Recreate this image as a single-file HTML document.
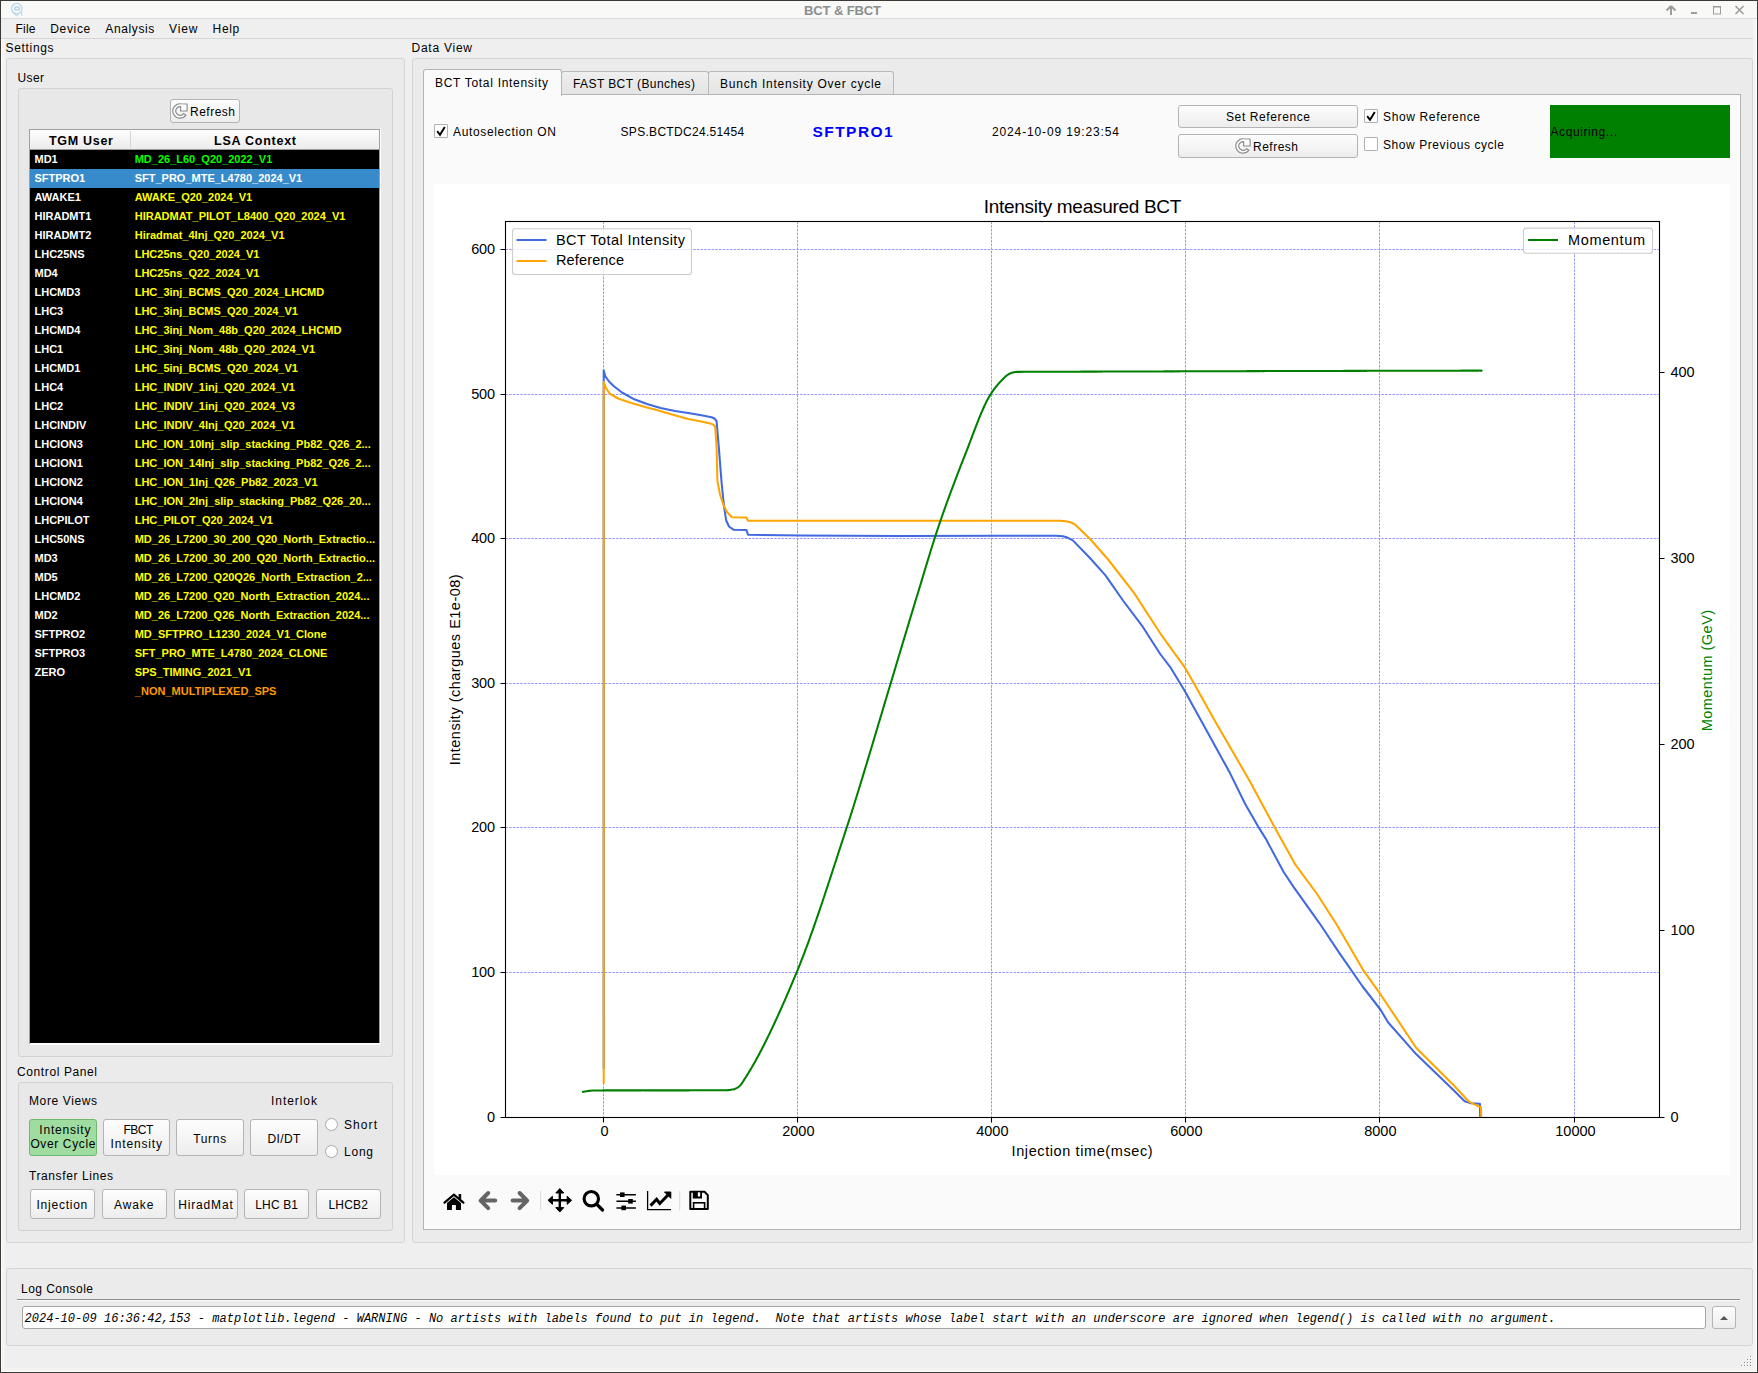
<!DOCTYPE html><html><head><meta charset="utf-8"><title>BCT &amp; FBCT</title><style>html,body{margin:0;padding:0;width:1758px;height:1373px;overflow:hidden;position:relative}</style></head><body><div style="position:absolute;left:0px;top:0px;width:1758px;height:1373px;background:#efefef"></div>
<div style="position:absolute;left:1px;top:1px;width:1756px;height:18px;background:#f9f9f8"></div>
<div style="position:absolute;left:1px;top:18px;width:1756px;height:1px;background:#dcdcdc"></div>
<div style="position:absolute;left:1px;top:38px;width:1752px;height:1px;background:#d6d6d6"></div>
<div style="position:absolute;left:1px;top:39px;width:4px;height:1333px;background:#f5f4f2"></div>
<div style="position:absolute;left:1px;top:39px;width:1px;height:1333px;background:#ffffff"></div>
<div style="position:absolute;left:1753px;top:19px;width:4px;height:1353px;background:#f5f4f2"></div>
<div style="position:absolute;left:1756px;top:19px;width:1px;height:1353px;background:#ffffff"></div>
<div style="position:absolute;left:1px;top:1368px;width:1756px;height:4px;background:#f5f4f2"></div>
<div style="position:absolute;left:1px;top:1371px;width:1756px;height:1px;background:#ffffff"></div>
<div style="position:absolute;left:0px;top:0px;width:1758px;height:1px;background:#3b3a36"></div>
<div style="position:absolute;left:0px;top:0px;width:1px;height:1373px;background:#3b3a36"></div>
<div style="position:absolute;left:1757px;top:0px;width:1px;height:1373px;background:#3b3a36"></div>
<div style="position:absolute;left:0px;top:1372px;width:1758px;height:1px;background:#3b3a36"></div>
<div style="position:absolute;left:804.00px;top:3.95px;font:normal bold 13px/13px 'Liberation Sans', sans-serif;letter-spacing:-0.111px;color:#8b8f8f;white-space:nowrap;">BCT &amp; FBCT</div>
<svg style="position:absolute;left:9px;top:1px" width="18" height="18" viewBox="0 0 18 18"><circle cx="7.8" cy="7.6" r="5.2" fill="none" stroke="#b4d6ee" stroke-width="1.3"/><ellipse cx="8" cy="7.4" rx="2.4" ry="1.6" fill="none" stroke="#a6cdea" stroke-width="1.2"/><path d="M4 11.5 L7.5 14.5 M12.5 11 L13 15 M9.5 12.5 L8 15.5" stroke="#b8d8ee" stroke-width="1.1"/></svg>
<svg style="position:absolute;left:1660px;top:2px" width="94" height="16" viewBox="0 0 94 16"><path d="M11 4 L6.5 8.5 M11 4 L15.5 8.5 M11 4 V13" stroke="#9c9c9c" stroke-width="2" fill="none"/><rect x="31" y="10" width="6" height="2" fill="#9c9c9c"/><rect x="53.5" y="4.5" width="7" height="7.5" fill="none" stroke="#9c9c9c" stroke-width="1"/><rect x="53" y="4" width="8" height="1.5" fill="#9c9c9c"/><path d="M75.5 4 L83.5 12 M83.5 4 L75.5 12" stroke="#9c9c9c" stroke-width="1.6"/></svg>
<div style="position:absolute;left:15.50px;top:22.80px;font:normal normal 12px/12px 'Liberation Sans', sans-serif;letter-spacing:0.217px;color:#000;white-space:nowrap;">File</div>
<div style="position:absolute;left:50.30px;top:22.80px;font:normal normal 12px/12px 'Liberation Sans', sans-serif;letter-spacing:0.660px;color:#000;white-space:nowrap;">Device</div>
<div style="position:absolute;left:105.30px;top:22.80px;font:normal normal 12px/12px 'Liberation Sans', sans-serif;letter-spacing:0.614px;color:#000;white-space:nowrap;">Analysis</div>
<div style="position:absolute;left:169.10px;top:22.80px;font:normal normal 12px/12px 'Liberation Sans', sans-serif;letter-spacing:0.850px;color:#000;white-space:nowrap;">View</div>
<div style="position:absolute;left:212.60px;top:22.80px;font:normal normal 12px/12px 'Liberation Sans', sans-serif;letter-spacing:0.633px;color:#000;white-space:nowrap;">Help</div>
<div style="position:absolute;left:5.60px;top:41.50px;font:normal normal 12px/12px 'Liberation Sans', sans-serif;letter-spacing:0.664px;color:#000;white-space:nowrap;">Settings</div>
<div style="position:absolute;left:6px;top:58px;width:399px;height:1185px;box-sizing:border-box;border:1px solid #d4d4d4;border-radius:3px;background:#ebebeb"></div>
<div style="position:absolute;left:17.50px;top:71.80px;font:normal normal 12px/12px 'Liberation Sans', sans-serif;letter-spacing:0.383px;color:#000;white-space:nowrap;">User</div>
<div style="position:absolute;left:18px;top:88px;width:375px;height:969px;box-sizing:border-box;border:1px solid #d2d2d2;border-radius:3px;background:#e8e8e8"></div>
<div style="position:absolute;left:170px;top:99px;width:70px;height:24px;box-sizing:border-box;border:1px solid #b4b4b4;border-radius:3px;background:linear-gradient(#fdfdfd,#ededed)"></div>
<svg style="position:absolute;left:172.4px;top:102.5px" width="17" height="17" viewBox="0 0 17 17"><path d="M8.6 0.8 A7.2 7.2 0 1 0 13.9 12.2 L11.7 10.6 A4.4 4.4 0 1 1 8.6 3.6 L8.6 8 L15.1 8 L15.1 1 Z" fill="#fcfcfc" stroke="#8c8c8c" stroke-width="1.15" stroke-linejoin="round"/></svg>
<div style="position:absolute;left:190.00px;top:105.80px;font:normal normal 12px/12px 'Liberation Sans', sans-serif;letter-spacing:0.500px;color:#000;white-space:nowrap;">Refresh</div>
<div style="position:absolute;left:29px;top:129px;width:351px;height:915px;background:#a0a0a0"></div>
<div style="position:absolute;left:30px;top:130px;width:349px;height:913px;background:#000"></div>
<div style="position:absolute;left:30px;top:1043px;width:351px;height:2px;background:#fff"></div>
<div style="position:absolute;left:380px;top:128px;width:1px;height:916px;background:#fff"></div>
<div style="position:absolute;left:30px;top:130px;width:349px;height:20px;background:linear-gradient(#fdfdfd,#ebebeb)"></div>
<div style="position:absolute;left:30px;top:149px;width:349px;height:1px;background:#9a9a9a"></div>
<div style="position:absolute;left:130px;top:131px;width:1px;height:17px;background:#d6d6d6"></div>
<div style="position:absolute;left:49.00px;top:135.18px;font:normal bold 12.5px/12.5px 'Liberation Sans', sans-serif;letter-spacing:0.707px;color:#000;white-space:nowrap;">TGM User</div>
<div style="position:absolute;left:214.00px;top:134.88px;font:normal bold 12.5px/12.5px 'Liberation Sans', sans-serif;letter-spacing:0.745px;color:#000;white-space:nowrap;">LSA Context</div>
<div style="position:absolute;left:34.50px;top:153.65px;font:normal bold 11px/11px 'Liberation Sans', sans-serif;letter-spacing:0.000px;color:#ffffff;white-space:nowrap;">MD1</div>
<div style="position:absolute;left:134.70px;top:153.65px;font:normal bold 11px/11px 'Liberation Sans', sans-serif;letter-spacing:0.000px;color:#00ff00;white-space:nowrap;">MD_26_L60_Q20_2022_V1</div>
<div style="position:absolute;left:30px;top:169px;width:349px;height:19px;background:#388bca"></div>
<div style="position:absolute;left:34.50px;top:172.65px;font:normal bold 11px/11px 'Liberation Sans', sans-serif;letter-spacing:0.000px;color:#ffffff;white-space:nowrap;">SFTPRO1</div>
<div style="position:absolute;left:134.70px;top:172.65px;font:normal bold 11px/11px 'Liberation Sans', sans-serif;letter-spacing:0.000px;color:#ffffff;white-space:nowrap;">SFT_PRO_MTE_L4780_2024_V1</div>
<div style="position:absolute;left:34.50px;top:191.65px;font:normal bold 11px/11px 'Liberation Sans', sans-serif;letter-spacing:0.000px;color:#ffffff;white-space:nowrap;">AWAKE1</div>
<div style="position:absolute;left:134.70px;top:191.65px;font:normal bold 11px/11px 'Liberation Sans', sans-serif;letter-spacing:0.000px;color:#ffff00;white-space:nowrap;">AWAKE_Q20_2024_V1</div>
<div style="position:absolute;left:34.50px;top:210.65px;font:normal bold 11px/11px 'Liberation Sans', sans-serif;letter-spacing:0.000px;color:#ffffff;white-space:nowrap;">HIRADMT1</div>
<div style="position:absolute;left:134.70px;top:210.65px;font:normal bold 11px/11px 'Liberation Sans', sans-serif;letter-spacing:0.000px;color:#ffff00;white-space:nowrap;">HIRADMAT_PILOT_L8400_Q20_2024_V1</div>
<div style="position:absolute;left:34.50px;top:229.65px;font:normal bold 11px/11px 'Liberation Sans', sans-serif;letter-spacing:0.000px;color:#ffffff;white-space:nowrap;">HIRADMT2</div>
<div style="position:absolute;left:134.70px;top:229.65px;font:normal bold 11px/11px 'Liberation Sans', sans-serif;letter-spacing:0.000px;color:#ffff00;white-space:nowrap;">Hiradmat_4Inj_Q20_2024_V1</div>
<div style="position:absolute;left:34.50px;top:248.65px;font:normal bold 11px/11px 'Liberation Sans', sans-serif;letter-spacing:0.000px;color:#ffffff;white-space:nowrap;">LHC25NS</div>
<div style="position:absolute;left:134.70px;top:248.65px;font:normal bold 11px/11px 'Liberation Sans', sans-serif;letter-spacing:0.000px;color:#ffff00;white-space:nowrap;">LHC25ns_Q20_2024_V1</div>
<div style="position:absolute;left:34.50px;top:267.65px;font:normal bold 11px/11px 'Liberation Sans', sans-serif;letter-spacing:0.000px;color:#ffffff;white-space:nowrap;">MD4</div>
<div style="position:absolute;left:134.70px;top:267.65px;font:normal bold 11px/11px 'Liberation Sans', sans-serif;letter-spacing:0.000px;color:#ffff00;white-space:nowrap;">LHC25ns_Q22_2024_V1</div>
<div style="position:absolute;left:34.50px;top:286.65px;font:normal bold 11px/11px 'Liberation Sans', sans-serif;letter-spacing:0.000px;color:#ffffff;white-space:nowrap;">LHCMD3</div>
<div style="position:absolute;left:134.70px;top:286.65px;font:normal bold 11px/11px 'Liberation Sans', sans-serif;letter-spacing:0.000px;color:#ffff00;white-space:nowrap;">LHC_3inj_BCMS_Q20_2024_LHCMD</div>
<div style="position:absolute;left:34.50px;top:305.65px;font:normal bold 11px/11px 'Liberation Sans', sans-serif;letter-spacing:0.000px;color:#ffffff;white-space:nowrap;">LHC3</div>
<div style="position:absolute;left:134.70px;top:305.65px;font:normal bold 11px/11px 'Liberation Sans', sans-serif;letter-spacing:0.000px;color:#ffff00;white-space:nowrap;">LHC_3inj_BCMS_Q20_2024_V1</div>
<div style="position:absolute;left:34.50px;top:324.65px;font:normal bold 11px/11px 'Liberation Sans', sans-serif;letter-spacing:0.000px;color:#ffffff;white-space:nowrap;">LHCMD4</div>
<div style="position:absolute;left:134.70px;top:324.65px;font:normal bold 11px/11px 'Liberation Sans', sans-serif;letter-spacing:0.000px;color:#ffff00;white-space:nowrap;">LHC_3inj_Nom_48b_Q20_2024_LHCMD</div>
<div style="position:absolute;left:34.50px;top:343.65px;font:normal bold 11px/11px 'Liberation Sans', sans-serif;letter-spacing:0.000px;color:#ffffff;white-space:nowrap;">LHC1</div>
<div style="position:absolute;left:134.70px;top:343.65px;font:normal bold 11px/11px 'Liberation Sans', sans-serif;letter-spacing:0.000px;color:#ffff00;white-space:nowrap;">LHC_3inj_Nom_48b_Q20_2024_V1</div>
<div style="position:absolute;left:34.50px;top:362.65px;font:normal bold 11px/11px 'Liberation Sans', sans-serif;letter-spacing:0.000px;color:#ffffff;white-space:nowrap;">LHCMD1</div>
<div style="position:absolute;left:134.70px;top:362.65px;font:normal bold 11px/11px 'Liberation Sans', sans-serif;letter-spacing:0.000px;color:#ffff00;white-space:nowrap;">LHC_5inj_BCMS_Q20_2024_V1</div>
<div style="position:absolute;left:34.50px;top:381.65px;font:normal bold 11px/11px 'Liberation Sans', sans-serif;letter-spacing:0.000px;color:#ffffff;white-space:nowrap;">LHC4</div>
<div style="position:absolute;left:134.70px;top:381.65px;font:normal bold 11px/11px 'Liberation Sans', sans-serif;letter-spacing:0.000px;color:#ffff00;white-space:nowrap;">LHC_INDIV_1inj_Q20_2024_V1</div>
<div style="position:absolute;left:34.50px;top:400.65px;font:normal bold 11px/11px 'Liberation Sans', sans-serif;letter-spacing:0.000px;color:#ffffff;white-space:nowrap;">LHC2</div>
<div style="position:absolute;left:134.70px;top:400.65px;font:normal bold 11px/11px 'Liberation Sans', sans-serif;letter-spacing:0.000px;color:#ffff00;white-space:nowrap;">LHC_INDIV_1inj_Q20_2024_V3</div>
<div style="position:absolute;left:34.50px;top:419.65px;font:normal bold 11px/11px 'Liberation Sans', sans-serif;letter-spacing:0.000px;color:#ffffff;white-space:nowrap;">LHCINDIV</div>
<div style="position:absolute;left:134.70px;top:419.65px;font:normal bold 11px/11px 'Liberation Sans', sans-serif;letter-spacing:0.000px;color:#ffff00;white-space:nowrap;">LHC_INDIV_4Inj_Q20_2024_V1</div>
<div style="position:absolute;left:34.50px;top:438.65px;font:normal bold 11px/11px 'Liberation Sans', sans-serif;letter-spacing:0.000px;color:#ffffff;white-space:nowrap;">LHCION3</div>
<div style="position:absolute;left:134.70px;top:438.65px;font:normal bold 11px/11px 'Liberation Sans', sans-serif;letter-spacing:0.000px;color:#ffff00;white-space:nowrap;">LHC_ION_10Inj_slip_stacking_Pb82_Q26_2...</div>
<div style="position:absolute;left:34.50px;top:457.65px;font:normal bold 11px/11px 'Liberation Sans', sans-serif;letter-spacing:0.000px;color:#ffffff;white-space:nowrap;">LHCION1</div>
<div style="position:absolute;left:134.70px;top:457.65px;font:normal bold 11px/11px 'Liberation Sans', sans-serif;letter-spacing:0.000px;color:#ffff00;white-space:nowrap;">LHC_ION_14Inj_slip_stacking_Pb82_Q26_2...</div>
<div style="position:absolute;left:34.50px;top:476.65px;font:normal bold 11px/11px 'Liberation Sans', sans-serif;letter-spacing:0.000px;color:#ffffff;white-space:nowrap;">LHCION2</div>
<div style="position:absolute;left:134.70px;top:476.65px;font:normal bold 11px/11px 'Liberation Sans', sans-serif;letter-spacing:0.000px;color:#ffff00;white-space:nowrap;">LHC_ION_1Inj_Q26_Pb82_2023_V1</div>
<div style="position:absolute;left:34.50px;top:495.65px;font:normal bold 11px/11px 'Liberation Sans', sans-serif;letter-spacing:0.000px;color:#ffffff;white-space:nowrap;">LHCION4</div>
<div style="position:absolute;left:134.70px;top:495.65px;font:normal bold 11px/11px 'Liberation Sans', sans-serif;letter-spacing:0.000px;color:#ffff00;white-space:nowrap;">LHC_ION_2Inj_slip_stacking_Pb82_Q26_20...</div>
<div style="position:absolute;left:34.50px;top:514.65px;font:normal bold 11px/11px 'Liberation Sans', sans-serif;letter-spacing:0.000px;color:#ffffff;white-space:nowrap;">LHCPILOT</div>
<div style="position:absolute;left:134.70px;top:514.65px;font:normal bold 11px/11px 'Liberation Sans', sans-serif;letter-spacing:0.000px;color:#ffff00;white-space:nowrap;">LHC_PILOT_Q20_2024_V1</div>
<div style="position:absolute;left:34.50px;top:533.65px;font:normal bold 11px/11px 'Liberation Sans', sans-serif;letter-spacing:0.000px;color:#ffffff;white-space:nowrap;">LHC50NS</div>
<div style="position:absolute;left:134.70px;top:533.65px;font:normal bold 11px/11px 'Liberation Sans', sans-serif;letter-spacing:0.000px;color:#ffff00;white-space:nowrap;">MD_26_L7200_30_200_Q20_North_Extractio...</div>
<div style="position:absolute;left:34.50px;top:552.65px;font:normal bold 11px/11px 'Liberation Sans', sans-serif;letter-spacing:0.000px;color:#ffffff;white-space:nowrap;">MD3</div>
<div style="position:absolute;left:134.70px;top:552.65px;font:normal bold 11px/11px 'Liberation Sans', sans-serif;letter-spacing:0.000px;color:#ffff00;white-space:nowrap;">MD_26_L7200_30_200_Q20_North_Extractio...</div>
<div style="position:absolute;left:34.50px;top:571.65px;font:normal bold 11px/11px 'Liberation Sans', sans-serif;letter-spacing:0.000px;color:#ffffff;white-space:nowrap;">MD5</div>
<div style="position:absolute;left:134.70px;top:571.65px;font:normal bold 11px/11px 'Liberation Sans', sans-serif;letter-spacing:0.000px;color:#ffff00;white-space:nowrap;">MD_26_L7200_Q20Q26_North_Extraction_2...</div>
<div style="position:absolute;left:34.50px;top:590.65px;font:normal bold 11px/11px 'Liberation Sans', sans-serif;letter-spacing:0.000px;color:#ffffff;white-space:nowrap;">LHCMD2</div>
<div style="position:absolute;left:134.70px;top:590.65px;font:normal bold 11px/11px 'Liberation Sans', sans-serif;letter-spacing:0.000px;color:#ffff00;white-space:nowrap;">MD_26_L7200_Q20_North_Extraction_2024...</div>
<div style="position:absolute;left:34.50px;top:609.65px;font:normal bold 11px/11px 'Liberation Sans', sans-serif;letter-spacing:0.000px;color:#ffffff;white-space:nowrap;">MD2</div>
<div style="position:absolute;left:134.70px;top:609.65px;font:normal bold 11px/11px 'Liberation Sans', sans-serif;letter-spacing:0.000px;color:#ffff00;white-space:nowrap;">MD_26_L7200_Q26_North_Extraction_2024...</div>
<div style="position:absolute;left:34.50px;top:628.65px;font:normal bold 11px/11px 'Liberation Sans', sans-serif;letter-spacing:0.000px;color:#ffffff;white-space:nowrap;">SFTPRO2</div>
<div style="position:absolute;left:134.70px;top:628.65px;font:normal bold 11px/11px 'Liberation Sans', sans-serif;letter-spacing:0.000px;color:#ffff00;white-space:nowrap;">MD_SFTPRO_L1230_2024_V1_Clone</div>
<div style="position:absolute;left:34.50px;top:647.65px;font:normal bold 11px/11px 'Liberation Sans', sans-serif;letter-spacing:0.000px;color:#ffffff;white-space:nowrap;">SFTPRO3</div>
<div style="position:absolute;left:134.70px;top:647.65px;font:normal bold 11px/11px 'Liberation Sans', sans-serif;letter-spacing:0.000px;color:#ffff00;white-space:nowrap;">SFT_PRO_MTE_L4780_2024_CLONE</div>
<div style="position:absolute;left:34.50px;top:666.65px;font:normal bold 11px/11px 'Liberation Sans', sans-serif;letter-spacing:0.000px;color:#ffffff;white-space:nowrap;">ZERO</div>
<div style="position:absolute;left:134.70px;top:666.65px;font:normal bold 11px/11px 'Liberation Sans', sans-serif;letter-spacing:0.000px;color:#ffff00;white-space:nowrap;">SPS_TIMING_2021_V1</div>
<div style="position:absolute;left:134.85px;top:685.65px;font:normal bold 11px/11px 'Liberation Sans', sans-serif;letter-spacing:0.000px;color:#ff9900;white-space:nowrap;">_NON_MULTIPLEXED_SPS</div>
<div style="position:absolute;left:17.00px;top:1065.80px;font:normal normal 12px/12px 'Liberation Sans', sans-serif;letter-spacing:0.608px;color:#000;white-space:nowrap;">Control Panel</div>
<div style="position:absolute;left:18px;top:1082px;width:375px;height:149px;box-sizing:border-box;border:1px solid #d2d2d2;border-radius:3px;background:#e8e8e8"></div>
<div style="position:absolute;left:29.00px;top:1094.80px;font:normal normal 12px/12px 'Liberation Sans', sans-serif;letter-spacing:0.617px;color:#000;white-space:nowrap;">More Views</div>
<div style="position:absolute;left:271.00px;top:1094.80px;font:normal normal 12px/12px 'Liberation Sans', sans-serif;letter-spacing:0.943px;color:#000;white-space:nowrap;">Interlok</div>
<div style="position:absolute;left:29px;top:1119px;width:68px;height:37px;box-sizing:border-box;border:1px solid #6fb86f;border-radius:3px;background:#9fdc9f"></div>
<div style="position:absolute;left:39.30px;top:1124.40px;font:normal normal 12px/12px 'Liberation Sans', sans-serif;letter-spacing:0.812px;color:#000;white-space:nowrap;">Intensity</div>
<div style="position:absolute;left:30.40px;top:1138.20px;font:normal normal 12px/12px 'Liberation Sans', sans-serif;letter-spacing:0.628px;color:#000;white-space:nowrap;">Over Cycle</div>
<div style="position:absolute;left:103px;top:1119px;width:67px;height:37px;box-sizing:border-box;border:1px solid #b4b4b4;border-radius:3px;background:linear-gradient(#fdfdfd,#ededed)"></div>
<div style="position:absolute;left:123.40px;top:1124.40px;font:normal normal 12px/12px 'Liberation Sans', sans-serif;letter-spacing:-0.450px;color:#000;white-space:nowrap;">FBCT</div>
<div style="position:absolute;left:110.60px;top:1138.20px;font:normal normal 12px/12px 'Liberation Sans', sans-serif;letter-spacing:0.825px;color:#000;white-space:nowrap;">Intensity</div>
<div style="position:absolute;left:176px;top:1119px;width:68px;height:37px;box-sizing:border-box;border:1px solid #b4b4b4;border-radius:3px;background:linear-gradient(#fdfdfd,#ededed)"></div>
<div style="position:absolute;left:193.20px;top:1132.90px;font:normal normal 12px/12px 'Liberation Sans', sans-serif;letter-spacing:0.688px;color:#000;white-space:nowrap;">Turns</div>
<div style="position:absolute;left:250px;top:1119px;width:68px;height:37px;box-sizing:border-box;border:1px solid #b4b4b4;border-radius:3px;background:linear-gradient(#fdfdfd,#ededed)"></div>
<div style="position:absolute;left:267.60px;top:1132.90px;font:normal normal 12px/12px 'Liberation Sans', sans-serif;letter-spacing:0.362px;color:#000;white-space:nowrap;">DI/DT</div>
<div style="position:absolute;left:324.5px;top:1117.5px;width:13px;height:13px;box-sizing:border-box;border:1px solid #a9a9a9;border-radius:50%;background:#fdfdfd"></div>
<div style="position:absolute;left:344.00px;top:1118.80px;font:normal normal 12px/12px 'Liberation Sans', sans-serif;letter-spacing:1.075px;color:#000;white-space:nowrap;">Short</div>
<div style="position:absolute;left:324.5px;top:1144.5px;width:13px;height:13px;box-sizing:border-box;border:1px solid #a9a9a9;border-radius:50%;background:#fdfdfd"></div>
<div style="position:absolute;left:344.00px;top:1145.80px;font:normal normal 12px/12px 'Liberation Sans', sans-serif;letter-spacing:0.767px;color:#000;white-space:nowrap;">Long</div>
<div style="position:absolute;left:29.00px;top:1169.80px;font:normal normal 12px/12px 'Liberation Sans', sans-serif;letter-spacing:0.596px;color:#000;white-space:nowrap;">Transfer Lines</div>
<div style="position:absolute;left:30px;top:1189px;width:65px;height:30px;box-sizing:border-box;border:1px solid #b4b4b4;border-radius:3px;background:linear-gradient(#fdfdfd,#ededed)"></div>
<div style="position:absolute;left:36.50px;top:1198.80px;font:normal normal 12px/12px 'Liberation Sans', sans-serif;letter-spacing:0.762px;color:#000;white-space:nowrap;">Injection</div>
<div style="position:absolute;left:102px;top:1189px;width:65px;height:30px;box-sizing:border-box;border:1px solid #b4b4b4;border-radius:3px;background:linear-gradient(#fdfdfd,#ededed)"></div>
<div style="position:absolute;left:114.10px;top:1198.80px;font:normal normal 12px/12px 'Liberation Sans', sans-serif;letter-spacing:0.875px;color:#000;white-space:nowrap;">Awake</div>
<div style="position:absolute;left:174px;top:1189px;width:64px;height:30px;box-sizing:border-box;border:1px solid #b4b4b4;border-radius:3px;background:linear-gradient(#fdfdfd,#ededed)"></div>
<div style="position:absolute;left:178.20px;top:1198.80px;font:normal normal 12px/12px 'Liberation Sans', sans-serif;letter-spacing:0.843px;color:#000;white-space:nowrap;">HiradMat</div>
<div style="position:absolute;left:244px;top:1189px;width:65px;height:30px;box-sizing:border-box;border:1px solid #b4b4b4;border-radius:3px;background:linear-gradient(#fdfdfd,#ededed)"></div>
<div style="position:absolute;left:255.30px;top:1198.80px;font:normal normal 12px/12px 'Liberation Sans', sans-serif;letter-spacing:0.140px;color:#000;white-space:nowrap;">LHC B1</div>
<div style="position:absolute;left:316px;top:1189px;width:65px;height:30px;box-sizing:border-box;border:1px solid #b4b4b4;border-radius:3px;background:linear-gradient(#fdfdfd,#ededed)"></div>
<div style="position:absolute;left:328.40px;top:1198.80px;font:normal normal 12px/12px 'Liberation Sans', sans-serif;letter-spacing:0.225px;color:#000;white-space:nowrap;">LHCB2</div>
<div style="position:absolute;left:411.50px;top:41.80px;font:normal normal 12px/12px 'Liberation Sans', sans-serif;letter-spacing:0.750px;color:#000;white-space:nowrap;">Data View</div>
<div style="position:absolute;left:412px;top:58px;width:1341px;height:1185px;box-sizing:border-box;border:1px solid #d4d4d4;border-radius:3px;background:#ebebeb"></div>
<div style="position:absolute;left:561px;top:71px;width:148px;height:24px;box-sizing:border-box;border:1px solid #b9b9b9;border-bottom:none;border-radius:3px 3px 0 0;background:linear-gradient(#efefef,#e3e3e3)"></div>
<div style="position:absolute;left:708px;top:71px;width:186px;height:24px;box-sizing:border-box;border:1px solid #b9b9b9;border-bottom:none;border-radius:3px 3px 0 0;background:linear-gradient(#efefef,#e3e3e3)"></div>
<div style="position:absolute;left:423px;top:94px;width:1318px;height:1136px;box-sizing:border-box;border:1px solid #b4b4b4;background:#fafafa"></div>
<div style="position:absolute;left:423px;top:69px;width:139px;height:27px;box-sizing:border-box;border:1px solid #b4b4b4;border-bottom:none;border-radius:3px 3px 0 0;background:#fafafa"></div>
<div style="position:absolute;left:435.00px;top:76.80px;font:normal normal 12px/12px 'Liberation Sans', sans-serif;letter-spacing:0.706px;color:#000;white-space:nowrap;">BCT Total Intensity</div>
<div style="position:absolute;left:573.00px;top:77.80px;font:normal normal 12px/12px 'Liberation Sans', sans-serif;letter-spacing:0.415px;color:#000;white-space:nowrap;">FAST BCT (Bunches)</div>
<div style="position:absolute;left:720.00px;top:77.80px;font:normal normal 12px/12px 'Liberation Sans', sans-serif;letter-spacing:0.758px;color:#000;white-space:nowrap;">Bunch Intensity Over cycle</div>
<div style="position:absolute;left:434px;top:124px;width:14px;height:14px;box-sizing:border-box;border:1px solid #b0b0b0;background:#fff;border-radius:1px"></div>
<svg style="position:absolute;left:434px;top:124px" width="14" height="14" viewBox="0 0 14 14"><path d="M3.2 7.2 L6 10.8 L10.8 3" fill="none" stroke="#000" stroke-width="1.9"/></svg>
<div style="position:absolute;left:453.00px;top:125.80px;font:normal normal 12px/12px 'Liberation Sans', sans-serif;letter-spacing:0.640px;color:#000;white-space:nowrap;">Autoselection ON</div>
<div style="position:absolute;left:620.50px;top:125.80px;font:normal normal 12px/12px 'Liberation Sans', sans-serif;letter-spacing:0.309px;color:#000;white-space:nowrap;">SPS.BCTDC24.51454</div>
<div style="position:absolute;left:812.50px;top:123.63px;font:normal bold 15.5px/15.5px 'Liberation Sans', sans-serif;letter-spacing:1.450px;color:#0000ff;white-space:nowrap;">SFTPRO1</div>
<div style="position:absolute;left:992.00px;top:125.80px;font:normal normal 12px/12px 'Liberation Sans', sans-serif;letter-spacing:0.864px;color:#000;white-space:nowrap;">2024-10-09 19:23:54</div>
<div style="position:absolute;left:1178px;top:105px;width:180px;height:23px;box-sizing:border-box;border:1px solid #b4b4b4;border-radius:3px;background:linear-gradient(#fdfdfd,#ededed)"></div>
<div style="position:absolute;left:1226.00px;top:110.80px;font:normal normal 12px/12px 'Liberation Sans', sans-serif;letter-spacing:0.608px;color:#000;white-space:nowrap;">Set Reference</div>
<div style="position:absolute;left:1178px;top:134px;width:180px;height:24px;box-sizing:border-box;border:1px solid #b4b4b4;border-radius:3px;background:linear-gradient(#fdfdfd,#ededed)"></div>
<svg style="position:absolute;left:1235.2px;top:137.5px" width="17" height="17" viewBox="0 0 17 17"><path d="M8.6 0.8 A7.2 7.2 0 1 0 13.9 12.2 L11.7 10.6 A4.4 4.4 0 1 1 8.6 3.6 L8.6 8 L15.1 8 L15.1 1 Z" fill="#fcfcfc" stroke="#8c8c8c" stroke-width="1.15" stroke-linejoin="round"/></svg>
<div style="position:absolute;left:1253.00px;top:140.50px;font:normal normal 12px/12px 'Liberation Sans', sans-serif;letter-spacing:0.500px;color:#000;white-space:nowrap;">Refresh</div>
<div style="position:absolute;left:1364px;top:109px;width:14px;height:14px;box-sizing:border-box;border:1px solid #b0b0b0;background:#fff;border-radius:1px"></div>
<svg style="position:absolute;left:1364px;top:109px" width="14" height="14" viewBox="0 0 14 14"><path d="M3.2 7.2 L6 10.8 L10.8 3" fill="none" stroke="#000" stroke-width="1.9"/></svg>
<div style="position:absolute;left:1383.00px;top:111.00px;font:normal normal 12px/12px 'Liberation Sans', sans-serif;letter-spacing:0.638px;color:#000;white-space:nowrap;">Show Reference</div>
<div style="position:absolute;left:1364px;top:137px;width:14px;height:14px;box-sizing:border-box;border:1px solid #b0b0b0;background:#fff;border-radius:1px"></div>
<div style="position:absolute;left:1383.00px;top:139.00px;font:normal normal 12px/12px 'Liberation Sans', sans-serif;letter-spacing:0.572px;color:#000;white-space:nowrap;">Show Previous cycle</div>
<div style="position:absolute;left:1550px;top:105px;width:180px;height:53px;background:#008000"></div>
<div style="position:absolute;left:1550.50px;top:125.60px;font:normal normal 12px/12px 'Liberation Sans', sans-serif;letter-spacing:0.586px;color:#000;white-space:nowrap;">Acquiring...</div>
<div style="position:absolute;left:434px;top:184px;width:1296px;height:991px;background:#fff"></div>
<div style="position:absolute;left:6px;top:1268px;width:1747px;height:78px;box-sizing:border-box;border:1px solid #d4d4d4;border-radius:3px;background:#ebebeb"></div>
<div style="position:absolute;left:21.00px;top:1282.80px;font:normal normal 12px/12px 'Liberation Sans', sans-serif;letter-spacing:0.460px;color:#000;white-space:nowrap;">Log Console</div>
<div style="position:absolute;left:17px;top:1299px;width:1723px;height:1px;background:#8c8c8c"></div>
<div style="position:absolute;left:17px;top:1300px;width:1723px;height:1px;background:#fbfbfb"></div>
<div style="position:absolute;left:22px;top:1306px;width:1684px;height:23px;box-sizing:border-box;border:1px solid #a6a6a6;border-radius:3px;background:#fff"></div>
<div style="position:absolute;left:24.5px;top:1312.56px;font:italic 12px/12px 'Liberation Mono', monospace;letter-spacing:0.02px;color:#000;white-space:pre">2024-10-09 16:36:42,153 - matplotlib.legend - WARNING - No artists with labels found to put in legend.  Note that artists whose label start with an underscore are ignored when legend() is called with no argument.</div>
<div style="position:absolute;left:1712px;top:1306px;width:24px;height:23px;box-sizing:border-box;border:1px solid #b4b4b4;border-radius:3px;background:linear-gradient(#fdfdfd,#ededed)"></div>
<svg style="position:absolute;left:1712px;top:1306px" width="24" height="23" viewBox="0 0 24 23"><path d="M8 14 L12 10 L16 14 Z" fill="#555"/></svg>
<svg style="position:absolute;left:1740px;top:1355px" width="14" height="14"><rect x="11" y="2" width="1" height="1" fill="#ffffff"/><rect x="10" y="1" width="1" height="1" fill="#8c8c8c"/><rect x="8" y="5" width="1" height="1" fill="#ffffff"/><rect x="7" y="4" width="1" height="1" fill="#8c8c8c"/><rect x="11" y="5" width="1" height="1" fill="#ffffff"/><rect x="10" y="4" width="1" height="1" fill="#8c8c8c"/><rect x="5" y="8" width="1" height="1" fill="#ffffff"/><rect x="4" y="7" width="1" height="1" fill="#8c8c8c"/><rect x="8" y="8" width="1" height="1" fill="#ffffff"/><rect x="7" y="7" width="1" height="1" fill="#8c8c8c"/><rect x="11" y="8" width="1" height="1" fill="#ffffff"/><rect x="10" y="7" width="1" height="1" fill="#8c8c8c"/><rect x="2" y="11" width="1" height="1" fill="#ffffff"/><rect x="1" y="10" width="1" height="1" fill="#8c8c8c"/><rect x="5" y="11" width="1" height="1" fill="#ffffff"/><rect x="4" y="10" width="1" height="1" fill="#8c8c8c"/><rect x="8" y="11" width="1" height="1" fill="#ffffff"/><rect x="7" y="10" width="1" height="1" fill="#8c8c8c"/><rect x="11" y="11" width="1" height="1" fill="#ffffff"/><rect x="10" y="10" width="1" height="1" fill="#8c8c8c"/></svg>
<svg style="position:absolute;left:0;top:0" width="1758" height="1373" viewBox="0 0 1758 1373"><defs><clipPath id="ax"><rect x="505.5" y="221.5" width="1154.0" height="896.0"/></clipPath></defs><path d="M603.50 221.5 V1117.5 M797.50 221.5 V1117.5 M991.50 221.5 V1117.5 M1185.50 221.5 V1117.5 M1379.50 221.5 V1117.5 M1574.50 221.5 V1117.5 M505.5 972.50 H1659.5 M505.5 827.50 H1659.5 M505.5 683.50 H1659.5 M505.5 538.50 H1659.5 M505.5 394.50 H1659.5 M505.5 249.50 H1659.5" stroke="#9898ff" stroke-width="1" stroke-dasharray="2.57 1.11" fill="none"/><g clip-path="url(#ax)" fill="none" stroke-width="2.05" stroke-linejoin="round" stroke-linecap="square"><polyline points="603.70,1068.00 603.70,370.20 605.20,376.00 609.00,381.50 613.90,386.20 622.00,392.50 634.30,399.30 647.00,404.00 660.60,408.10 675.00,411.00 689.70,413.20 700.00,415.00 711.50,417.20 714.50,418.50 716.60,421.20 718.80,447.40 721.70,483.80 724.00,506.00 726.10,520.20 729.00,526.50 733.40,529.70 746.50,530.10 748.00,534.80 800.00,535.50 900.00,536.00 1000.00,535.80 1056.00,535.80 1063.00,536.30 1068.00,537.80 1072.80,540.40 1089.00,557.00 1105.50,575.40 1123.00,600.50 1142.70,626.70 1160.20,654.00 1171.00,668.20 1184.20,690.00 1206.00,729.40 1230.00,773.10 1245.30,804.20 1259.30,828.40 1265.70,838.60 1283.50,871.80 1293.70,887.10 1319.20,922.80 1339.60,953.40 1362.60,986.50 1380.40,1009.50 1388.00,1022.20 1416.10,1054.10 1454.40,1091.10 1464.60,1101.30 1471.00,1103.30 1479.90,1103.80 1480.20,1117.50" stroke="#4169e1"/><polyline points="603.70,1082.70 603.70,381.90 606.00,388.00 609.60,393.50 618.00,398.50 631.40,403.00 645.00,407.00 657.60,410.30 672.00,414.50 688.20,419.00 700.00,421.20 710.10,423.40 713.50,424.80 715.20,427.00 716.60,447.40 717.40,480.90 720.00,494.50 723.20,504.20 727.00,512.00 731.90,517.30 746.50,517.60 748.00,520.70 800.00,520.80 900.00,520.80 1000.00,520.80 1060.00,520.80 1066.00,521.30 1071.00,522.50 1075.00,524.50 1090.30,539.30 1107.70,559.00 1134.00,592.90 1160.20,633.30 1185.30,668.20 1194.00,683.50 1214.80,720.70 1249.10,780.00 1274.60,827.20 1295.00,864.10 1316.70,893.50 1337.10,925.30 1363.90,971.20 1380.40,994.20 1416.10,1047.70 1454.40,1086.00 1468.40,1101.30 1478.60,1106.40 1481.00,1107.00 1481.20,1117.50" stroke="#ffa500"/><polyline points="583.00,1091.80 584.00,1091.66 585.00,1091.50 586.00,1091.34 587.00,1091.18 588.00,1091.02 589.00,1090.88 590.00,1090.76 591.00,1090.66 592.00,1090.60 593.00,1090.56 594.00,1090.52 595.00,1090.49 596.00,1090.46 597.00,1090.44 598.00,1090.42 599.00,1090.41 600.00,1090.40 601.00,1090.40 602.00,1090.40 603.00,1090.39 604.00,1090.39 605.00,1090.39 606.00,1090.39 607.00,1090.39 608.00,1090.38 609.00,1090.38 610.00,1090.38 611.00,1090.38 612.00,1090.38 613.00,1090.38 614.00,1090.38 615.00,1090.37 616.00,1090.37 617.00,1090.37 618.00,1090.37 619.00,1090.37 620.00,1090.37 621.00,1090.37 622.00,1090.37 623.00,1090.37 624.00,1090.37 625.00,1090.36 626.00,1090.36 627.00,1090.36 628.00,1090.36 629.00,1090.36 630.00,1090.36 631.00,1090.36 632.00,1090.36 633.00,1090.36 634.00,1090.36 635.00,1090.36 636.00,1090.36 637.00,1090.36 638.00,1090.36 639.00,1090.36 640.00,1090.36 641.00,1090.36 642.00,1090.36 643.00,1090.35 644.00,1090.35 645.00,1090.35 646.00,1090.35 647.00,1090.35 648.00,1090.35 649.00,1090.35 650.00,1090.35 651.00,1090.35 652.00,1090.35 653.00,1090.35 654.00,1090.35 655.00,1090.35 656.00,1090.35 657.00,1090.35 658.00,1090.35 659.00,1090.35 660.00,1090.35 661.00,1090.35 662.00,1090.35 663.00,1090.35 664.00,1090.35 665.00,1090.35 666.00,1090.35 667.00,1090.35 668.00,1090.35 669.00,1090.35 670.00,1090.35 671.00,1090.35 672.00,1090.35 673.00,1090.35 674.00,1090.35 675.00,1090.35 676.00,1090.35 677.00,1090.35 678.00,1090.35 679.00,1090.35 680.00,1090.35 681.00,1090.35 682.00,1090.35 683.00,1090.35 684.00,1090.35 685.00,1090.35 686.00,1090.35 687.00,1090.35 688.00,1090.35 689.00,1090.35 690.00,1090.34 691.00,1090.34 692.00,1090.34 693.00,1090.34 694.00,1090.34 695.00,1090.34 696.00,1090.34 697.00,1090.34 698.00,1090.34 699.00,1090.34 700.00,1090.34 701.00,1090.34 702.00,1090.34 703.00,1090.33 704.00,1090.33 705.00,1090.33 706.00,1090.33 707.00,1090.33 708.00,1090.33 709.00,1090.33 710.00,1090.33 711.00,1090.33 712.00,1090.32 713.00,1090.32 714.00,1090.32 715.00,1090.32 716.00,1090.32 717.00,1090.32 718.00,1090.31 719.00,1090.31 720.00,1090.31 721.00,1090.31 722.00,1090.31 723.00,1090.30 724.00,1090.30 725.00,1090.30 726.00,1090.28 727.00,1090.23 728.00,1090.14 729.00,1090.03 730.00,1089.90 731.00,1089.75 732.00,1089.58 733.00,1089.40 734.00,1089.16 735.00,1088.82 736.00,1088.38 737.00,1087.86 738.00,1087.26 739.00,1086.60 740.02,1085.71 741.03,1084.52 742.05,1083.11 743.07,1081.54 744.08,1079.91 745.10,1078.30 746.11,1076.72 747.12,1075.12 748.12,1073.49 749.13,1071.83 750.14,1070.15 751.15,1068.45 752.15,1066.72 753.16,1064.97 754.17,1063.20 755.18,1061.41 756.19,1059.59 757.19,1057.75 758.20,1055.89 759.21,1054.01 760.22,1052.10 761.23,1050.18 762.23,1048.24 763.24,1046.27 764.25,1044.29 765.26,1042.29 766.26,1040.27 767.27,1038.23 768.28,1036.17 769.29,1034.10 770.30,1032.01 771.30,1029.90 772.31,1027.77 773.32,1025.63 774.33,1023.48 775.34,1021.30 776.34,1019.11 777.35,1016.91 778.36,1014.69 779.37,1012.46 780.37,1010.22 781.38,1007.96 782.39,1005.68 783.40,1003.40 784.41,1001.10 785.41,998.79 786.42,996.47 787.43,994.14 788.44,991.80 789.45,989.44 790.45,987.08 791.46,984.71 792.47,982.32 793.48,979.93 794.48,977.53 795.49,975.12 796.50,972.70 797.51,970.27 798.51,967.80 799.52,965.30 800.52,962.77 801.53,960.21 802.54,957.62 803.54,955.01 804.55,952.36 805.55,949.69 806.56,947.00 807.57,944.27 808.57,941.53 809.58,938.76 810.58,935.97 811.59,933.15 812.60,930.32 813.60,927.46 814.61,924.59 815.61,921.69 816.62,918.78 817.63,915.86 818.63,912.91 819.64,909.95 820.64,906.98 821.65,903.99 822.66,900.99 823.66,897.98 824.67,894.96 825.67,891.93 826.68,888.88 827.69,885.83 828.69,882.77 829.70,879.71 830.70,876.64 831.71,873.56 832.72,870.48 833.72,867.39 834.73,864.30 835.73,861.21 836.74,858.12 837.75,855.02 838.75,851.93 839.76,848.84 840.76,845.75 841.77,842.66 842.78,839.58 843.78,836.50 844.79,833.43 845.79,830.36 846.80,827.30 847.89,823.98 848.97,820.62 850.06,817.24 851.15,813.83 852.24,810.40 853.33,806.95 854.41,803.48 855.50,800.00 856.50,796.78 857.51,793.54 858.51,790.30 859.51,787.04 860.51,783.78 861.52,780.50 862.52,777.21 863.52,773.92 864.53,770.62 865.53,767.30 866.53,763.99 867.53,760.66 868.54,757.33 869.54,754.00 870.54,750.66 871.55,747.31 872.55,743.96 873.55,740.61 874.55,737.25 875.56,733.89 876.56,730.53 877.56,727.17 878.57,723.81 879.57,720.45 880.57,717.09 881.57,713.73 882.58,710.37 883.58,707.01 884.58,703.65 885.59,700.30 886.59,696.95 887.59,693.61 888.59,690.27 889.60,686.93 890.60,683.60 891.62,680.23 892.63,676.86 893.65,673.48 894.66,670.10 895.68,666.72 896.69,663.33 897.71,659.95 898.72,656.56 899.74,653.18 900.75,649.79 901.77,646.40 902.78,643.02 903.80,639.64 904.82,636.25 905.83,632.87 906.85,629.50 907.86,626.13 908.88,622.76 909.89,619.39 910.91,616.03 911.92,612.68 912.94,609.33 913.95,605.99 914.97,602.65 915.98,599.32 917.00,596.00 918.01,592.69 919.02,589.38 920.03,586.04 921.04,582.71 922.05,579.36 923.05,576.01 924.06,572.67 925.07,569.32 926.08,565.99 927.09,562.66 928.10,559.34 929.11,556.04 930.12,552.76 931.13,549.50 932.14,546.26 933.15,543.05 934.15,539.86 935.16,536.71 936.17,533.60 937.18,530.52 938.19,527.49 939.20,524.50 940.23,521.48 941.26,518.48 942.30,515.51 943.33,512.57 944.36,509.64 945.39,506.74 946.42,503.87 947.46,501.01 948.49,498.18 949.52,495.36 950.55,492.56 951.58,489.79 952.62,487.02 953.65,484.28 954.68,481.55 955.71,478.84 956.74,476.14 957.78,473.46 958.81,470.79 959.84,468.13 960.87,465.48 961.90,462.85 962.94,460.22 963.97,457.61 965.00,455.00 966.02,452.41 967.04,449.78 968.06,447.13 969.08,444.45 970.10,441.76 971.12,439.06 972.14,436.35 973.16,433.65 974.18,430.96 975.20,428.29 976.22,425.64 977.24,423.02 978.26,420.43 979.28,417.89 980.30,415.39 981.32,412.95 982.34,410.57 983.36,408.26 984.38,406.02 985.40,403.87 986.42,401.79 987.44,399.82 988.46,397.94 989.48,396.16 990.50,394.50 991.54,392.90 992.58,391.36 993.62,389.88 994.67,388.47 995.71,387.12 996.75,385.82 997.79,384.57 998.83,383.37 999.88,382.21 1000.92,381.10 1001.96,380.03 1003.00,379.00 1004.00,378.01 1005.00,377.04 1006.00,376.10 1007.00,375.26 1008.00,374.55 1009.00,374.00 1010.00,373.56 1011.00,373.13 1012.00,372.74 1013.00,372.41 1014.00,372.14 1015.00,371.97 1016.00,371.90 1017.00,371.89 1018.00,371.88 1019.00,371.87 1020.00,371.86 1021.00,371.85 1022.00,371.85 1023.00,371.84 1024.00,371.83 1025.00,371.82 1026.00,371.82 1027.00,371.81 1028.00,371.80 1029.00,371.80 1030.00,371.79 1031.00,371.78 1032.00,371.78 1033.00,371.77 1034.00,371.77 1035.00,371.76 1036.00,371.76 1037.00,371.75 1038.00,371.75 1039.00,371.74 1040.00,371.74 1041.00,371.73 1042.00,371.73 1043.00,371.73 1044.00,371.72 1045.00,371.72 1046.00,371.71 1047.00,371.71 1048.00,371.71 1049.00,371.70 1050.00,371.70 1051.00,371.70 1052.00,371.70 1053.00,371.69 1054.00,371.69 1055.00,371.69 1056.00,371.69 1057.00,371.68 1058.00,371.68 1059.00,371.68 1060.00,371.68 1061.00,371.68 1062.00,371.67 1063.00,371.67 1064.00,371.67 1065.00,371.67 1066.00,371.67 1067.00,371.67 1068.00,371.66 1069.00,371.66 1070.00,371.66 1071.00,371.66 1072.00,371.66 1073.00,371.66 1074.00,371.66 1075.00,371.65 1076.00,371.65 1077.00,371.65 1078.00,371.65 1079.00,371.65 1080.00,371.65 1081.00,371.64 1082.00,371.64 1083.00,371.64 1084.00,371.64 1085.00,371.64 1086.00,371.64 1087.00,371.63 1088.00,371.63 1089.00,371.63 1090.00,371.63 1091.00,371.62 1092.00,371.62 1093.00,371.62 1094.00,371.62 1095.00,371.61 1096.00,371.61 1097.00,371.61 1098.00,371.61 1099.00,371.60 1100.00,371.60 1101.00,371.60 1102.00,371.59 1103.00,371.59 1104.00,371.59 1105.00,371.58 1106.00,371.58 1107.00,371.58 1108.00,371.57 1109.00,371.57 1110.00,371.57 1111.00,371.56 1112.00,371.56 1113.00,371.56 1114.00,371.55 1115.00,371.55 1116.00,371.55 1117.00,371.54 1118.00,371.54 1119.00,371.54 1120.00,371.53 1121.00,371.53 1122.00,371.53 1123.00,371.52 1124.00,371.52 1125.00,371.52 1126.00,371.51 1127.00,371.51 1128.00,371.51 1129.00,371.50 1130.00,371.50 1131.00,371.50 1132.00,371.50 1133.00,371.49 1134.00,371.49 1135.00,371.49 1136.00,371.48 1137.00,371.48 1138.00,371.48 1139.00,371.47 1140.00,371.47 1141.00,371.47 1142.00,371.46 1143.00,371.46 1144.00,371.46 1145.00,371.45 1146.00,371.45 1147.00,371.45 1148.00,371.44 1149.00,371.44 1150.00,371.44 1151.00,371.43 1152.00,371.43 1153.00,371.43 1154.00,371.42 1155.00,371.42 1156.00,371.42 1157.00,371.41 1158.00,371.41 1159.00,371.41 1160.00,371.41 1161.00,371.40 1162.00,371.40 1163.00,371.40 1164.00,371.39 1165.00,371.39 1166.00,371.39 1167.00,371.38 1168.00,371.38 1169.00,371.38 1170.00,371.37 1171.00,371.37 1172.00,371.37 1173.00,371.36 1174.00,371.36 1175.00,371.36 1176.00,371.35 1177.00,371.35 1178.00,371.35 1179.00,371.35 1180.00,371.34 1181.00,371.34 1182.00,371.34 1183.00,371.33 1184.00,371.33 1185.00,371.33 1186.00,371.32 1187.00,371.32 1188.00,371.32 1189.00,371.31 1190.00,371.31 1191.00,371.31 1192.00,371.31 1193.00,371.30 1194.00,371.30 1195.00,371.30 1196.00,371.29 1197.00,371.29 1198.00,371.29 1199.00,371.28 1200.00,371.28 1201.00,371.28 1202.00,371.27 1203.00,371.27 1204.00,371.27 1205.00,371.27 1206.00,371.26 1207.00,371.26 1208.00,371.26 1209.00,371.25 1210.00,371.25 1211.00,371.25 1212.00,371.24 1213.00,371.24 1214.00,371.24 1215.00,371.24 1216.00,371.23 1217.00,371.23 1218.00,371.23 1219.00,371.22 1220.00,371.22 1221.00,371.22 1222.00,371.21 1223.00,371.21 1224.00,371.21 1225.00,371.21 1226.00,371.20 1227.00,371.20 1228.00,371.20 1229.00,371.19 1230.00,371.19 1231.00,371.19 1232.00,371.19 1233.00,371.18 1234.00,371.18 1235.00,371.18 1236.00,371.17 1237.00,371.17 1238.00,371.17 1239.00,371.17 1240.00,371.16 1241.00,371.16 1242.00,371.16 1243.00,371.15 1244.00,371.15 1245.00,371.15 1246.00,371.15 1247.00,371.14 1248.00,371.14 1249.00,371.14 1250.00,371.13 1251.00,371.13 1252.00,371.13 1253.00,371.13 1254.00,371.12 1255.00,371.12 1256.00,371.12 1257.00,371.11 1258.00,371.11 1259.00,371.11 1260.00,371.11 1261.00,371.10 1262.00,371.10 1263.00,371.10 1264.00,371.10 1265.00,371.09 1266.00,371.09 1267.00,371.09 1268.00,371.08 1269.00,371.08 1270.00,371.08 1271.00,371.08 1272.00,371.07 1273.00,371.07 1274.00,371.07 1275.00,371.07 1276.00,371.06 1277.00,371.06 1278.00,371.06 1279.00,371.05 1280.00,371.05 1281.00,371.05 1282.00,371.05 1283.00,371.04 1284.00,371.04 1285.00,371.04 1286.00,371.04 1287.00,371.03 1288.00,371.03 1289.00,371.03 1290.00,371.03 1291.00,371.02 1292.00,371.02 1293.00,371.02 1294.00,371.02 1295.00,371.01 1296.00,371.01 1297.00,371.01 1298.00,371.01 1299.00,371.00 1300.00,371.00 1301.00,371.00 1302.00,370.99 1303.01,370.99 1304.01,370.99 1305.01,370.99 1306.01,370.98 1307.02,370.98 1308.02,370.98 1309.02,370.98 1310.02,370.97 1311.02,370.97 1312.03,370.97 1313.03,370.97 1314.03,370.97 1315.03,370.96 1316.04,370.96 1317.04,370.96 1318.04,370.96 1319.04,370.95 1320.04,370.95 1321.05,370.95 1322.05,370.95 1323.05,370.94 1324.05,370.94 1325.06,370.94 1326.06,370.94 1327.06,370.93 1328.06,370.93 1329.06,370.93 1330.07,370.93 1331.07,370.92 1332.07,370.92 1333.07,370.92 1334.08,370.92 1335.08,370.92 1336.08,370.91 1337.08,370.91 1338.08,370.91 1339.09,370.91 1340.09,370.90 1341.09,370.90 1342.09,370.90 1343.10,370.90 1344.10,370.89 1345.10,370.89 1346.10,370.89 1347.10,370.89 1348.11,370.89 1349.11,370.88 1350.11,370.88 1351.11,370.88 1352.11,370.88 1353.12,370.87 1354.12,370.87 1355.12,370.87 1356.12,370.87 1357.13,370.87 1358.13,370.86 1359.13,370.86 1360.13,370.86 1361.13,370.86 1362.14,370.85 1363.14,370.85 1364.14,370.85 1365.14,370.85 1366.15,370.85 1367.15,370.84 1368.15,370.84 1369.15,370.84 1370.15,370.84 1371.16,370.83 1372.16,370.83 1373.16,370.83 1374.16,370.83 1375.17,370.83 1376.17,370.82 1377.17,370.82 1378.17,370.82 1379.17,370.82 1380.18,370.81 1381.18,370.81 1382.18,370.81 1383.18,370.81 1384.19,370.81 1385.19,370.80 1386.19,370.80 1387.19,370.80 1388.19,370.80 1389.20,370.80 1390.20,370.79 1391.20,370.79 1392.20,370.79 1393.21,370.79 1394.21,370.79 1395.21,370.78 1396.21,370.78 1397.21,370.78 1398.22,370.78 1399.22,370.77 1400.22,370.77 1401.22,370.77 1402.23,370.77 1403.23,370.77 1404.23,370.76 1405.23,370.76 1406.23,370.76 1407.24,370.76 1408.24,370.76 1409.24,370.75 1410.24,370.75 1411.25,370.75 1412.25,370.75 1413.25,370.74 1414.25,370.74 1415.25,370.74 1416.26,370.74 1417.26,370.74 1418.26,370.73 1419.26,370.73 1420.27,370.73 1421.27,370.73 1422.27,370.73 1423.27,370.72 1424.27,370.72 1425.28,370.72 1426.28,370.72 1427.28,370.72 1428.28,370.71 1429.29,370.71 1430.29,370.71 1431.29,370.71 1432.29,370.71 1433.29,370.70 1434.30,370.70 1435.30,370.70 1436.30,370.70 1437.30,370.69 1438.30,370.69 1439.31,370.69 1440.31,370.69 1441.31,370.69 1442.31,370.68 1443.32,370.68 1444.32,370.68 1445.32,370.68 1446.32,370.68 1447.32,370.67 1448.33,370.67 1449.33,370.67 1450.33,370.67 1451.33,370.66 1452.34,370.66 1453.34,370.66 1454.34,370.66 1455.34,370.66 1456.34,370.65 1457.35,370.65 1458.35,370.65 1459.35,370.65 1460.35,370.65 1461.36,370.64 1462.36,370.64 1463.36,370.64 1464.36,370.64 1465.36,370.63 1466.37,370.63 1467.37,370.63 1468.37,370.63 1469.37,370.63 1470.38,370.62 1471.38,370.62 1472.38,370.62 1473.38,370.62 1474.38,370.62 1475.39,370.61 1476.39,370.61 1477.39,370.61 1478.39,370.61 1479.40,370.60 1480.40,370.60 1481.40,370.60" stroke="#008000"/></g><rect x="505.5" y="221.5" width="1154.0" height="896.0" fill="none" stroke="#000" stroke-width="1.1" stroke-linecap="square"/><path d="M603.50 1117.5 v5 M797.50 1117.5 v5 M991.50 1117.5 v5 M1185.50 1117.5 v5 M1379.50 1117.5 v5 M1574.50 1117.5 v5 M505.5 1117.50 h-5 M505.5 972.50 h-5 M505.5 827.50 h-5 M505.5 683.50 h-5 M505.5 538.50 h-5 M505.5 394.50 h-5 M505.5 249.50 h-5 M1659.5 1117.50 h5 M1659.5 930.50 h5 M1659.5 744.50 h5 M1659.5 558.50 h5 M1659.5 372.50 h5" stroke="#000" stroke-width="1.1" fill="none"/><rect x="512.5" y="228.8" width="179" height="45.7" rx="2.8" fill="#fff" fill-opacity="0.8" stroke="#cccccc" stroke-width="1.1"/><path d="M516.5 240 h30" stroke="#4169e1" stroke-width="2.05"/><path d="M516.5 261 h30" stroke="#ffa500" stroke-width="2.05"/><rect x="1523.5" y="228.1" width="129" height="25.1" rx="2.8" fill="#fff" fill-opacity="0.8" stroke="#cccccc" stroke-width="1.1"/><path d="M1528 240 h30" stroke="#008000" stroke-width="2.05"/></svg>
<div style="position:absolute;left:983.70px;top:197.15px;font:normal normal 19px/19px 'Liberation Sans', sans-serif;letter-spacing:-0.290px;color:#000;white-space:nowrap;">Intensity measured BCT</div>
<div style="position:absolute;left:556.00px;top:232.68px;font:normal normal 14.5px/14.5px 'Liberation Sans', sans-serif;letter-spacing:0.436px;color:#000;white-space:nowrap;">BCT Total Intensity</div>
<div style="position:absolute;left:556.00px;top:253.38px;font:normal normal 14.5px/14.5px 'Liberation Sans', sans-serif;letter-spacing:0.137px;color:#000;white-space:nowrap;">Reference</div>
<div style="position:absolute;left:1568.00px;top:232.68px;font:normal normal 14.5px/14.5px 'Liberation Sans', sans-serif;letter-spacing:0.643px;color:#000;white-space:nowrap;">Momentum</div>
<div style="position:absolute;left:1011.60px;top:1144.47px;font:normal normal 14.5px/14.5px 'Liberation Sans', sans-serif;letter-spacing:0.592px;color:#000;white-space:nowrap;">Injection time(msec)</div>
<div style="position:absolute;left:600.38px;top:1124.47px;font:normal normal 14.5px/14.5px 'Liberation Sans', sans-serif;letter-spacing:0.000px;color:#000;white-space:nowrap;">0</div>
<div style="position:absolute;left:782.35px;top:1124.47px;font:normal normal 14.5px/14.5px 'Liberation Sans', sans-serif;letter-spacing:-0.050px;color:#000;white-space:nowrap;">2000</div>
<div style="position:absolute;left:976.35px;top:1124.47px;font:normal normal 14.5px/14.5px 'Liberation Sans', sans-serif;letter-spacing:-0.050px;color:#000;white-space:nowrap;">4000</div>
<div style="position:absolute;left:1170.35px;top:1124.47px;font:normal normal 14.5px/14.5px 'Liberation Sans', sans-serif;letter-spacing:-0.050px;color:#000;white-space:nowrap;">6000</div>
<div style="position:absolute;left:1364.35px;top:1124.47px;font:normal normal 14.5px/14.5px 'Liberation Sans', sans-serif;letter-spacing:-0.050px;color:#000;white-space:nowrap;">8000</div>
<div style="position:absolute;left:1555.25px;top:1124.47px;font:normal normal 14.5px/14.5px 'Liberation Sans', sans-serif;letter-spacing:0.000px;color:#000;white-space:nowrap;">10000</div>
<div style="position:absolute;left:487.05px;top:1109.77px;font:normal normal 14.5px/14.5px 'Liberation Sans', sans-serif;letter-spacing:0.000px;color:#000;white-space:nowrap;">0</div>
<div style="position:absolute;left:471.20px;top:964.77px;font:normal normal 14.5px/14.5px 'Liberation Sans', sans-serif;letter-spacing:-0.150px;color:#000;white-space:nowrap;">100</div>
<div style="position:absolute;left:471.20px;top:819.77px;font:normal normal 14.5px/14.5px 'Liberation Sans', sans-serif;letter-spacing:-0.150px;color:#000;white-space:nowrap;">200</div>
<div style="position:absolute;left:471.20px;top:675.77px;font:normal normal 14.5px/14.5px 'Liberation Sans', sans-serif;letter-spacing:-0.150px;color:#000;white-space:nowrap;">300</div>
<div style="position:absolute;left:471.20px;top:530.77px;font:normal normal 14.5px/14.5px 'Liberation Sans', sans-serif;letter-spacing:-0.150px;color:#000;white-space:nowrap;">400</div>
<div style="position:absolute;left:471.20px;top:386.78px;font:normal normal 14.5px/14.5px 'Liberation Sans', sans-serif;letter-spacing:-0.150px;color:#000;white-space:nowrap;">500</div>
<div style="position:absolute;left:471.20px;top:241.78px;font:normal normal 14.5px/14.5px 'Liberation Sans', sans-serif;letter-spacing:-0.150px;color:#000;white-space:nowrap;">600</div>
<div style="position:absolute;left:1670.60px;top:1109.97px;font:normal normal 14.5px/14.5px 'Liberation Sans', sans-serif;letter-spacing:0.000px;color:#000;white-space:nowrap;">0</div>
<div style="position:absolute;left:1670.60px;top:922.97px;font:normal normal 14.5px/14.5px 'Liberation Sans', sans-serif;letter-spacing:-0.150px;color:#000;white-space:nowrap;">100</div>
<div style="position:absolute;left:1670.60px;top:736.97px;font:normal normal 14.5px/14.5px 'Liberation Sans', sans-serif;letter-spacing:-0.150px;color:#000;white-space:nowrap;">200</div>
<div style="position:absolute;left:1670.60px;top:550.97px;font:normal normal 14.5px/14.5px 'Liberation Sans', sans-serif;letter-spacing:-0.150px;color:#000;white-space:nowrap;">300</div>
<div style="position:absolute;left:1670.60px;top:364.98px;font:normal normal 14.5px/14.5px 'Liberation Sans', sans-serif;letter-spacing:-0.150px;color:#000;white-space:nowrap;">400</div>
<div style="position:absolute;left:460.20px;top:752.97px;font:normal normal 14.5px/14.5px 'Liberation Sans', sans-serif;letter-spacing:0.496px;color:#000;white-space:nowrap;transform-origin:0.00px 12.32px;transform:rotate(-90deg);">Intensity (chargues E1e-08)</div>
<div style="position:absolute;left:1712.00px;top:718.88px;font:normal normal 14.5px/14.5px 'Liberation Sans', sans-serif;letter-spacing:0.477px;color:#008000;white-space:nowrap;transform-origin:0.00px 12.32px;transform:rotate(-90deg);">Momentum (GeV)</div>
<svg style="position:absolute;left:0;top:0" width="1758" height="1373" viewBox="0 0 1758 1373"><path d="M444.5 1202.7 L453.9 1194.6 L463.4 1202.7" fill="none" stroke="#000" stroke-width="2.2" stroke-linecap="round"/><rect x="458.6" y="1194" width="2.6" height="5" fill="#000"/><path d="M447 1203 L453.9 1197.2 L461 1203 V1210 H455.9 V1205 H451.9 V1210 H447 Z" fill="#000"/><path d="M488.2 1193 L480.6 1200.6 L488.2 1208.2 M481 1200.6 H495.2" fill="none" stroke="#646464" stroke-width="4" stroke-linecap="round" stroke-linejoin="round"/><path d="M519.6 1193 L527.2 1200.6 L519.6 1208.2 M526.8 1200.6 H512.6" fill="none" stroke="#646464" stroke-width="4" stroke-linecap="round" stroke-linejoin="round"/><rect x="540.2" y="1191" width="1" height="19" fill="#d8d8d8"/><rect x="679.2" y="1191" width="1" height="19" fill="#d8d8d8"/><path d="M559.8 1191 V1209.6 M550.5 1200.3 H569.1" stroke="#000" stroke-width="2.4"/><path d="M559.8 1188.6 L555.8 1193 H563.8 Z M559.8 1212 L555.8 1207.6 H563.8 Z M548 1200.3 L552.4 1196.3 V1204.3 Z M571.6 1200.3 L567.2 1196.3 V1204.3 Z" fill="#000" stroke="#000" stroke-width="1" stroke-linejoin="round"/><circle cx="591.3" cy="1198.7" r="7.2" fill="none" stroke="#000" stroke-width="3.1"/><path d="M597 1204.5 L602.5 1210" stroke="#000" stroke-width="3.2" stroke-linecap="round"/><path d="M616.4 1194.7 H635.9 M616.4 1201.3 H635.9 M616.4 1207.9 H635.9" stroke="#000" stroke-width="1.5"/><rect x="620" y="1192.4" width="4.6" height="4.6" fill="#000"/><rect x="628.2" y="1199" width="4.6" height="4.6" fill="#000"/><rect x="621.4" y="1205.6" width="4.6" height="4.6" fill="#000"/><path d="M647.6 1191 V1209.6 H671" fill="none" stroke="#000" stroke-width="1.3"/><path d="M650.6 1205.6 L656.6 1199.3 L659.8 1203.5 L668 1195" fill="none" stroke="#000" stroke-width="3"/><path d="M664.5 1192 H670.8 V1198.3 Z" fill="#000" stroke="#000" stroke-width="1"/><path d="M690.3 1191.8 H704.5 L707.8 1195.1 V1208.9 H690.3 Z" fill="none" stroke="#000" stroke-width="2" stroke-linejoin="round"/><path d="M692.8 1191.8 H702 V1198.5 H692.8 Z" fill="#000"/><rect x="697.8" y="1192.3" width="2.4" height="4.2" fill="#fafafa"/><rect x="693.6" y="1202.8" width="11" height="6" fill="none" stroke="#000" stroke-width="1.6"/></svg></body></html>
